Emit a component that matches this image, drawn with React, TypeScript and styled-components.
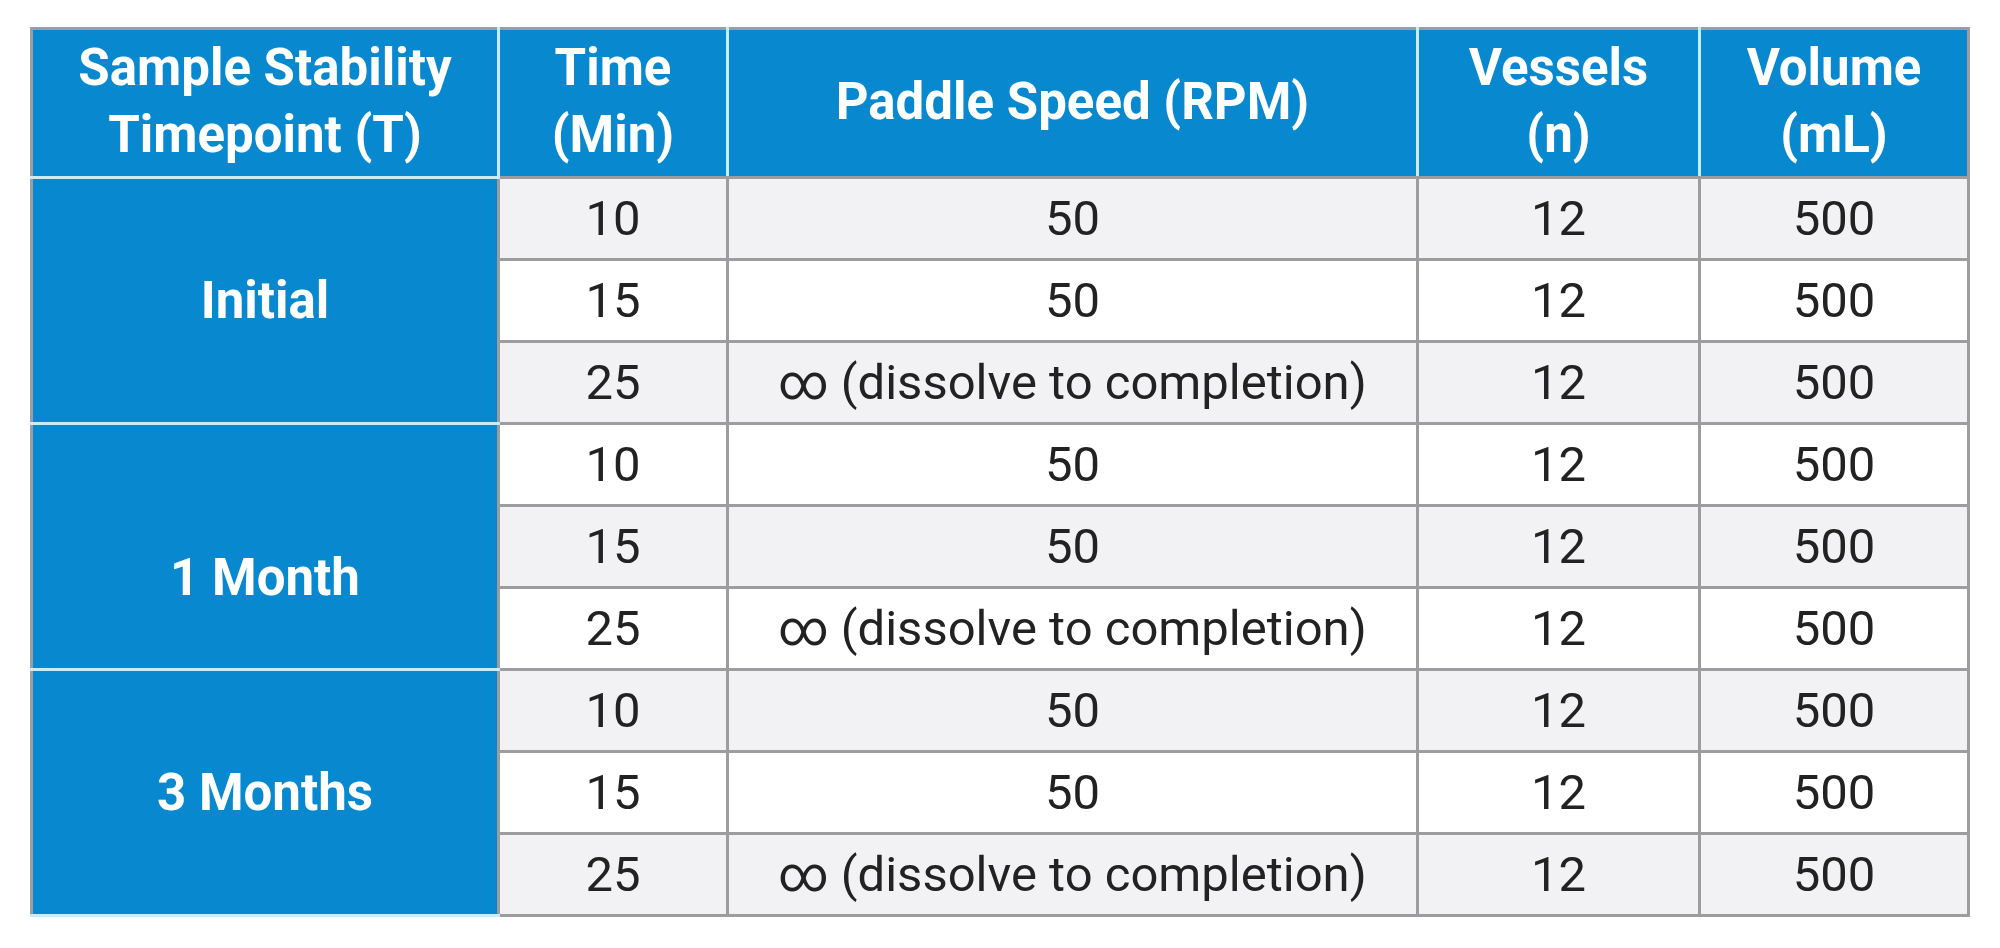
import React from "react";
import styled, { createGlobalStyle } from "styled-components";

const GlobalStyle = createGlobalStyle`
  html, body {
    margin: 0;
    padding: 0;
    background: #ffffff;
  }
  body {
    font-family: Roboto, "Liberation Sans", sans-serif;
  }
`;

const BLUE = "#0889cf";
const LIGHT_LINE = "#c9ecfb";
const GRAY_LINE = "#9d9d9f";

type Row = { time: number; speed: string; vessels: number; volume: number };

const timepoints: { label: string; shift: number; rows: Row[] }[] = [
  { label: "Initial", shift: 0 },
  { label: "1 Month", shift: 62 },
  { label: "3 Months", shift: 0 },
].map((tp) => ({
  ...tp,
  rows: [
    { time: 10, speed: "50", vessels: 12, volume: 500 },
    { time: 15, speed: "50", vessels: 12, volume: 500 },
    { time: 25, speed: "∞ (dissolve to completion)", vessels: 12, volume: 500 },
  ],
}));

export default function App() {
  let rowIndex = 0;
  return (
    <>
      <GlobalStyle />
      <Page>
        <Table>
          <colgroup>
            <col style={{ width: 467 }} />
            <col style={{ width: 229 }} />
            <col style={{ width: 690 }} />
            <col style={{ width: 282 }} />
            <col style={{ width: 269 }} />
          </colgroup>
          <thead>
            <tr>
              <HeadCell $first>
                Sample Stability
                <br />
                Timepoint (T)
              </HeadCell>
              <HeadCell>
                Time
                <br />
                (Min)
              </HeadCell>
              <HeadCell>Paddle Speed (RPM)</HeadCell>
              <HeadCell>
                Vessels
                <br />
                (n)
              </HeadCell>
              <HeadCell $last>
                Volume
                <br />
                (mL)
              </HeadCell>
            </tr>
          </thead>
          <tbody>
            {timepoints.map((tp) =>
              tp.rows.map((r, i) => {
                const shaded = rowIndex++ % 2 === 0;
                return (
                  <BodyRow key={tp.label + r.time} $shaded={shaded}>
                    {i === 0 && (
                      <GroupCell rowSpan={tp.rows.length} $shift={tp.shift}>
                        {tp.label}
                      </GroupCell>
                    )}
                    <Cell>{r.time}</Cell>
                    <Cell>{r.speed}</Cell>
                    <Cell>{r.vessels}</Cell>
                    <Cell>{r.volume}</Cell>
                  </BodyRow>
                );
              })
            )}
          </tbody>
        </Table>
      </Page>
    </>
  );
}

const Page = styled.div`
  padding: 27px 30px;
`;

const Table = styled.table`
  width: 1937px;
  border-collapse: collapse;
  table-layout: fixed;
  border: 3px solid ${GRAY_LINE};
`;

const HeadCell = styled.th<{ $first?: boolean; $last?: boolean }>`
  background: ${BLUE};
  color: #ffffff;
  font-weight: 700;
  font-size: 51px;
  line-height: 67px;
  height: 142px;
  padding: 0 0 4px;
  text-align: center;
  vertical-align: middle;
  border-right: ${(p) => (p.$last ? `3px solid ${GRAY_LINE}` : `3px solid ${LIGHT_LINE}`)};
  border-bottom: ${(p) => (p.$first ? `3px solid ${LIGHT_LINE}` : `3px solid ${GRAY_LINE}`)};
`;

const BodyRow = styled.tr<{ $shaded: boolean }>`
  background: ${(p) => (p.$shaded ? "#f2f2f4" : "#ffffff")};
`;

const GroupCell = styled.td<{ $shift: number }>`
  background: ${BLUE};
  color: #ffffff;
  font-weight: 700;
  font-size: 51px;
  text-align: center;
  vertical-align: middle;
  padding: ${(p) => p.$shift}px 0 0;
  border-bottom: 3px solid ${LIGHT_LINE};
  border-right: 3px solid ${GRAY_LINE};
`;

const Cell = styled.td`
  height: 79px;
  padding: 0;
  color: #222222;
  font-size: 49px;
  font-weight: 400;
  text-align: center;
  vertical-align: middle;
  border-bottom: 3px solid ${GRAY_LINE};
  border-right: 3px solid ${GRAY_LINE};
`;
